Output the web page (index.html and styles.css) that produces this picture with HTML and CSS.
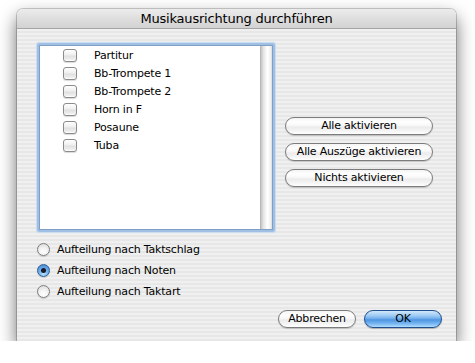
FILE: index.html
```html
<!DOCTYPE html>
<html>
<head>
<meta charset="utf-8">
<link rel="stylesheet" href="styles.css">
</head>
<body>
<div class="window">
  <div class="titlebar">Musikausrichtung durchführen</div>
  <div class="content">
    <div class="top">
      <div class="list-ring">
        <div class="list">
          <div class="rows">
            <div class="row"><span class="check"></span><span class="label">Partitur</span></div>
            <div class="row"><span class="check"></span><span class="label">Bb-Trompete 1</span></div>
            <div class="row"><span class="check"></span><span class="label">Bb-Trompete 2</span></div>
            <div class="row"><span class="check"></span><span class="label">Horn in F</span></div>
            <div class="row"><span class="check"></span><span class="label">Posaune</span></div>
            <div class="row"><span class="check"></span><span class="label">Tuba</span></div>
          </div>
          <div class="track"></div>
        </div>
      </div>
      <div class="actions">
        <div class="btn">Alle aktivieren</div>
        <div class="btn">Alle Auszüge aktivieren</div>
        <div class="btn">Nichts aktivieren</div>
      </div>
    </div>
    <div class="radios">
      <div class="radio-row"><span class="radio"></span><span class="label">Aufteilung nach Taktschlag</span></div>
      <div class="radio-row"><span class="radio on"><span class="dot"></span></span><span class="label">Aufteilung nach Noten</span></div>
      <div class="radio-row"><span class="radio"></span><span class="label">Aufteilung nach Taktart</span></div>
    </div>
    <div class="footer">
      <div class="btn small">Abbrechen</div>
      <div class="btn small default">OK</div>
    </div>
  </div>
</div>
</body>
</html>
```

FILE: styles.css
```css
html, body {
  margin: 0;
  padding: 0;
  background: #ffffff;
}
body {
  font-family: "DejaVu Sans", "Liberation Sans", sans-serif;
  font-size: 11px;
  color: #000;
  letter-spacing: -0.2px;
}
.window {
  margin: 9px 0 0 17px;
  width: 439px;
  height: 332px;
  border-radius: 6px 6px 0 0;
  box-shadow: 0 0 0 1px rgba(0,0,0,0.18), 0 8px 18px rgba(0,0,0,0.6);
  overflow: hidden;
  display: flex;
  flex-direction: column;
}
.titlebar {
  height: 19px;
  line-height: 19px;
  text-align: center;
  font-size: 13px;
  background: linear-gradient(to bottom, #ececec 0%, #dcdcdc 60%, #d2d2d2 100%);
  border-bottom: 1px solid #a6a6a6;
  color: #000;
}
.content {
  flex: 1;
  display: flex;
  flex-direction: column;
  padding: 14px 0 0 20px;
  background: repeating-linear-gradient(to bottom, #f0f0f0 0px, #f0f0f0 2px, #e7e7e7 2px, #e7e7e7 4px);
}
.top {
  display: flex;
  align-items: flex-start;
}
.list-ring {
  width: 238px;
  height: 189px;
  box-sizing: border-box;
  border: 2px solid #9fc0e4;
  border-radius: 2px;
  box-shadow: 0 0 1px 1px #c8dbef;
}
.list {
  height: 100%;
  box-sizing: border-box;
  border: 1px solid #7f9fc4;
  background: #fff;
  display: flex;
}
.rows {
  flex: 1;
  padding-top: 0;
}
.row {
  height: 18px;
  display: flex;
  align-items: center;
}
.check {
  width: 12px;
  height: 11px;
  margin-left: 23px;
  margin-right: 17px;
  border: 1px solid #8b8b8b;
  border-radius: 3px;
  background: linear-gradient(to bottom, #ffffff 0%, #efefef 45%, #e0e0e0 55%, #f4f4f4 100%);
  box-shadow: inset 0 -1px 1px rgba(255,255,255,0.8), 0 1px 1px rgba(0,0,0,0.15);
}
.track {
  width: 11px;
  background: linear-gradient(to right, #c4c4c4 0%, #e8e8e8 25%, #ffffff 60%, #f2f2f2 85%, #dadada 100%);
  border-left: 1px solid #b8b8b8;
}
.actions {
  margin-left: 10px;
  margin-top: 74px;
  width: 148px;
  display: flex;
  flex-direction: column;
  gap: 8px;
}
.btn {
  height: 18px;
  box-sizing: border-box;
  border: 1px solid #7c7c7c;
  border-radius: 9px;
  background: linear-gradient(to bottom, #f4f4f4 0%, #ffffff 25%, #f6f6f6 50%, #ebebeb 55%, #f4f4f4 80%, #ffffff 100%);
  box-shadow: 0 1px 1px rgba(0,0,0,0.18);
  text-align: center;
  line-height: 16px;
}
.radios {
  margin-top: 7px;
  display: flex;
  flex-direction: column;
}
.radio-row {
  height: 21px;
  display: flex;
  align-items: center;
}
.radio {
  width: 13px;
  height: 13px;
  box-sizing: border-box;
  border-radius: 50%;
  border: 1px solid #7d7d7d;
  background: radial-gradient(circle at 50% 75%, #ffffff 0%, #f4f4f4 40%, #d6d6d6 100%);
  box-shadow: 0 1px 1px rgba(0,0,0,0.15);
  margin-right: 7px;
  display: flex;
  align-items: center;
  justify-content: center;
}
.radio.on {
  border-color: #2e5f98;
  background: radial-gradient(circle at 50% 80%, #b9e0ff 0%, #6fb0ec 45%, #3f80cf 100%);
}
.dot {
  width: 5px;
  height: 5px;
  border-radius: 50%;
  background: #1a1a2a;
}
.footer {
  margin-top: 8px;
  padding-right: 14px;
  display: flex;
  justify-content: flex-end;
  gap: 8px;
}
.btn.small {
  width: 78px;
}
.btn.default {
  border-color: #1f4f8f;
  background: linear-gradient(to bottom, #d3e8fb 0%, #9ccaf4 30%, #6aa8ea 50%, #4c93e0 55%, #79b8f3 80%, #b3ddff 100%);
  box-shadow: 0 1px 1px rgba(0,0,0,0.25);
}
```
